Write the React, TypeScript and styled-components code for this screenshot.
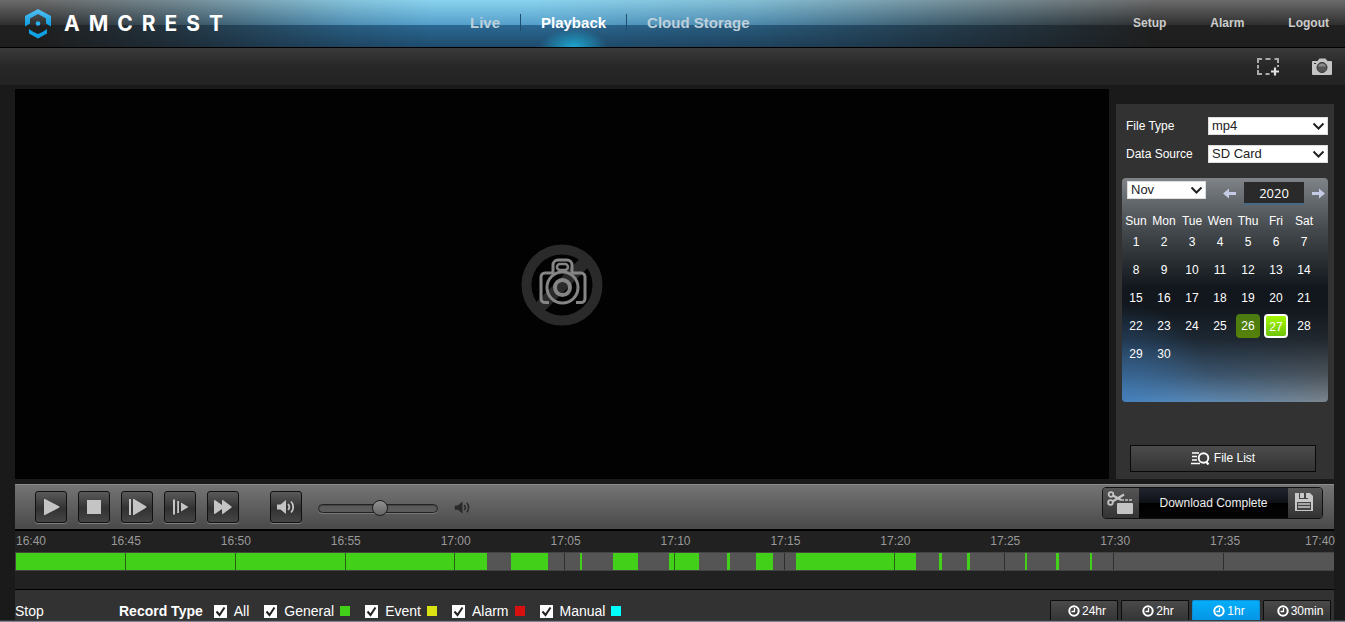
import React, { useState } from 'react';
import styled, { createGlobalStyle, css } from 'styled-components';

const GlobalStyle = createGlobalStyle`
  * { box-sizing: border-box; }
  body {
    margin: 0;
    background: #1a1a1a;
    color: #fff;
    font-family: "Liberation Sans", Arial, sans-serif;
    font-size: 12px;
  }
  button, input, select { font-family: inherit; margin: 0; }
`;

const chevron =
  "url(\"data:image/svg+xml,%3Csvg xmlns='http://www.w3.org/2000/svg' width='13' height='9'%3E%3Cpath d='M1.5 1.5l5 5 5-5' fill='none' stroke='%23222' stroke-width='2'/%3E%3C/svg%3E\")";
const tick =
  "url(\"data:image/svg+xml,%3Csvg xmlns='http://www.w3.org/2000/svg' width='13' height='13'%3E%3Cpath d='M2.5 6.5l3 3.5 5-7.5' fill='none' stroke='%23222' stroke-width='2'/%3E%3C/svg%3E\")";

const Page = styled.div`
  min-height: 100vh;
  display: flex;
  flex-direction: column;
`;

/* ---------- header ---------- */

const Header = styled.header`
  position: relative;
  display: flex;
  height: 48px;
  border-bottom: 1px solid #000;
  background: linear-gradient(#6c6c6c 0, #2e2e2e 25px, #202020 25px, #1e1e1e 100%);

  &::before {
    content: "";
    position: absolute;
    inset: 0;
    background: linear-gradient(#8ad2ee 0, #549fca 25px, #2b6993 25px, #1f4c6e 100%);
    mask-image: linear-gradient(
      90deg,
      transparent 3%,
      rgba(0, 0, 0, 0.3) 13%,
      rgba(0, 0, 0, 0.85) 26%,
      #000 32%,
      #000 40%,
      rgba(0, 0, 0, 0.8) 56%,
      rgba(0, 0, 0, 0.4) 70%,
      transparent 86%
    );
  }
`;

const Brand = styled.a`
  position: relative;
  flex: 0 0 450px;
  display: flex;
  align-items: center;
  gap: 12px;
  padding-left: 25px;
  color: #fff;
  text-decoration: none;
`;

const Wordmark = styled.span`
  font: 700 21px/24px Inter, "Liberation Sans", sans-serif;
  letter-spacing: 9px;
`;

const MainNav = styled.nav`
  position: relative;
  display: flex;
`;

const MainLink = styled.a<{ $active?: boolean }>`
  display: flex;
  justify-content: center;
  padding: 14px 20px 0;
  border-right: 1px solid transparent;
  font-size: 15px;
  line-height: 18px;
  font-weight: 700;
  text-decoration: none;
  white-space: nowrap;
  color: ${(p) => (p.$active ? '#fff' : '#bdd0dc')};
  background:
    linear-gradient(#1f4f70, #1f4f70) right 14px / 1px 17px no-repeat border-box
    ${(p) =>
      p.$active &&
      css`, radial-gradient(ellipse 34px 18px at 50% 100%, #1ea8d2, transparent) no-repeat`};

  &:last-child { background: none; }
`;

const UserNav = styled.nav`
  position: relative;
  display: flex;
  gap: 44px;
  margin-left: auto;
  padding: 14px 16px 0 0;

  a {
    font-size: 12px;
    line-height: 18px;
    font-weight: 700;
    color: #ccc;
    text-decoration: none;
  }
`;

const ToolStrip = styled.div`
  display: flex;
  justify-content: flex-end;
  align-items: center;
  gap: 32px;
  height: 37px;
  padding-right: 13px;
  background: linear-gradient(#3a3a3a, #272727 50%, #242424);
`;

const IconButton = styled.button`
  display: flex;
  padding: 0;
  border: 0;
  background: none;
  cursor: pointer;
`;

/* ---------- workspace ---------- */

const Workspace = styled.main`
  flex: 1;
  display: flex;
  flex-direction: column;
  padding: 4px 11px 0 15px;
`;

const Stage = styled.div`
  flex: 1;
  display: flex;
  gap: 7px;
  min-height: 390px;
  margin-bottom: 5px;
`;

const Video = styled.section`
  flex: 1;
  display: flex;
  align-items: center;
  justify-content: center;
  padding-top: 2px;
  background: #020202;
`;

const Sidebar = styled.aside`
  flex: 0 0 218px;
  display: flex;
  flex-direction: column;
  margin-top: 15px;
  padding: 13px 6px 7px;
  background: #323232;
`;

const Field = styled.label`
  display: flex;
  align-items: center;
  justify-content: space-between;
  height: 18px;
  margin-bottom: 10px;
  padding-left: 4px;
  font-size: 12px;
  line-height: 20px;
`;

const Select = styled.select<{ $width: number }>`
  appearance: none;
  width: ${(p) => p.$width}px;
  height: 18px;
  padding: 0 16px 0 3px;
  border: 1px solid #ddd;
  border-radius: 0;
  background: #fff ${chevron} right 2px center no-repeat;
  color: #222;
  font-size: 13px;
  line-height: 16px;
`;

const Calendar = styled.section`
  height: 224px;
  margin-top: 5px;
  border-radius: 4px;
  background:
    linear-gradient(#808488 0, #61666a 26px, #44494d 52px, rgba(18, 23, 29, 0) 110px),
    radial-gradient(ellipse 90px 100px at 0 100%, rgba(56, 115, 175, 0.55), transparent),
    linear-gradient(#12171d 58%, rgba(18, 23, 29, 0.85) 72%, rgba(18, 23, 29, 0.45) 88%, transparent),
    linear-gradient(90deg, #5591cb, #5f86ab 50%, #7b858e);
`;

const CalendarBar = styled.div`
  display: flex;
  align-items: flex-start;
  height: 36px;
  padding: 3px 3px 0 5px;
`;

const YearPicker = styled.div`
  display: flex;
  align-items: center;
  gap: 8px;
  margin: 1px 0 0 auto;
`;

const Year = styled.input`
  width: 60px;
  height: 23px;
  padding: 0;
  border: 0;
  border-bottom: 2px solid #456a85;
  background: #2a2a2a;
  color: #fff;
  text-align: center;
  && { font-family: "Open Sans", sans-serif; }
  font-size: 13px;
`;

const Days = styled.table`
  border-collapse: collapse;
  table-layout: fixed;
  width: 196px;

  th, td {
    padding: 0;
    font-size: 12px;
    font-weight: 400;
    text-align: center;
  }
  th { height: 14px; line-height: 14px; }
  td { height: 28px; }
`;

const Day = styled.button<{ $state?: 'recorded' | 'selected' }>`
  display: block;
  width: 24px;
  height: 24px;
  margin: 0 auto;
  padding: 0;
  border: 0;
  border-radius: 4px;
  background: none;
  color: #fff;
  font-size: 12px;
  cursor: pointer;
  ${(p) => p.$state === 'recorded' && css`background: linear-gradient(#4b7a12, #568208);`}
  ${(p) =>
    p.$state === 'selected' &&
    css`
      padding-top: 2px;
      border: 2px solid #fff;
      background: linear-gradient(#a4f800, #6fc40c);
    `}
`;

const FileListButton = styled.button`
  display: flex;
  align-items: center;
  justify-content: center;
  gap: 4px;
  height: 27px;
  margin: auto 12px 0 8px;
  padding: 0 0 1px;
  border: 1px solid #0a0a0a;
  background: linear-gradient(#4c4c4c, #333);
  color: #fff;
  font-size: 12px;
`;

/* ---------- playback controls ---------- */

const Controls = styled.div`
  display: flex;
  align-items: center;
  height: 47px;
  padding: 0 11px 0 20px;
  border-top: 1px solid #8c8c8c;
  border-bottom: 2px solid #000;
  background: linear-gradient(#747474, #494949);
`;

const ButtonGroup = styled.div`
  display: flex;
  gap: 11px;
  margin-right: 31px;
`;

const ControlButton = styled.button`
  display: flex;
  align-items: center;
  justify-content: center;
  width: 32px;
  height: 32px;
  padding: 0;
  border: 1px solid #111;
  border-radius: 3px;
  background: linear-gradient(#5a5a5a, #323232 55%, #454545);
  box-shadow: 0 1px 0 #808080;
`;

const Volume = styled.input`
  appearance: none;
  width: 120px;
  height: 9px;
  && { margin: 2px 16px 0; }
  border: 1px solid #222;
  border-radius: 5px;
  background: #5b5b5b;
  box-shadow: inset 0 1px 1px #444, 0 1px 0 #777;

  &::-webkit-slider-thumb {
    appearance: none;
    width: 16px;
    height: 16px;
    border: 1px solid #1c1c1c;
    border-radius: 50%;
    background: linear-gradient(#909090, #666);
  }
`;

const Download = styled.div`
  display: flex;
  height: 32px;
  margin: 0 0 10px auto;
  border: 1px solid #111;
  border-radius: 4px;
  overflow: hidden;
  align-self: flex-end;
`;

const DownloadButton = styled.button<{ $width: number }>`
  display: flex;
  align-items: center;
  justify-content: center;
  width: ${(p) => p.$width}px;
  padding: 0 2px 2px 0;
  border: 0;
  background: linear-gradient(#555, #333);
`;

const DownloadStatus = styled.output`
  width: 149px;
  line-height: 30px;
  text-align: center;
  font-size: 12px;
  color: #eee;
  background: linear-gradient(#22252e, #0e1016 50%, #000 50%, #050505);
`;

/* ---------- timeline ---------- */

const Timeline = styled.section`
  height: 58px;
  padding-top: 3px;
  background: #212121;
`;

const Hours = styled.div`
  display: grid;
  grid-template-columns: 1fr repeat(11, 2fr) 1fr;
  height: 18px;
  margin: 0 -1px 0 1px;
  line-height: 14px;
  font-size: 12px;
  color: #999;
  text-align: center;

  time:first-child { text-align: left; }
  time:last-child { text-align: right; }
`;

const Track = styled.div`
  position: relative;
  display: flex;
  height: 19px;
  border: 1px solid #444;
  border-width: 1px 0 1px 1px;
  background: #555;
`;

const Span = styled.div<{ $recorded: boolean }>`
  flex-basis: 0;
  background: ${(p) => (p.$recorded ? '#42d018' : '#555')};
`;

const Ticks = styled.div`
  position: absolute;
  inset: 0;
  display: grid;
  grid-template-columns: repeat(12, 1fr);

  i { border-right: 1px solid rgba(20, 20, 20, 0.6); }
  i:last-child { border: 0; }
`;

/* ---------- footer ---------- */

const Footer = styled.footer`
  display: flex;
  align-items: flex-end;
  height: 31px;
  border-top: 1px solid #000;
  background: #323232;
  font-size: 14px;
  line-height: 18px;
`;

const Status = styled.span`
  flex: 0 0 104px;
`;

const Filters = styled.fieldset`
  display: flex;
  align-items: center;
  gap: 15px;
  margin: 0;
  padding: 0;
  border: 0;
`;

const FilterTitle = styled.strong`
  margin-right: -4px;
`;

const Filter = styled.label`
  display: flex;
  align-items: center;
  gap: 7px;
`;

const Check = styled.input`
  appearance: none;
  width: 13px;
  height: 13px;
  background: #fff;
  &:checked { background: #fff ${tick} center no-repeat; }
`;

const Swatch = styled.span<{ $color: string }>`
  width: 10px;
  height: 10px;
  margin-left: -1px;
  background: ${(p) => p.$color};
`;

const Scales = styled.div`
  display: flex;
  gap: 3px;
  margin: 0 3px 0 auto;
`;

const ScaleButton = styled.button<{ $active: boolean }>`
  display: flex;
  align-items: center;
  justify-content: center;
  gap: 2px;
  width: 68px;
  height: 20px;
  padding: 0 0 0 6px;
  border: 1px solid ${(p) => (p.$active ? '#0a8fd8' : '#0c0c0c')};
  border-bottom: 0;
  border-radius: 2px 2px 0 0;
  background: ${(p) => (p.$active ? 'linear-gradient(#05aef8, #0595e6)' : 'linear-gradient(#4a4a4a, #353535)')};
  color: #fff;
  font-size: 12px;
`;

const BottomEdge = styled.div`
  height: 2px;
  background: #7f838c;
  border-top: 1px solid #3a3a40;
`;

/* ---------- drawings ---------- */

const LogoMark = () => (
  <svg width="27" height="30" viewBox="0 0 27 30" aria-hidden="true">
    <defs>
      <linearGradient id="mark" x1="0" y1="0" x2="0" y2="1">
        <stop offset="0" stopColor="#55c0f0" />
        <stop offset="1" stopColor="#0c9ce0" />
      </linearGradient>
    </defs>
    <path d="M0 17.500V7L13 0l13 7v10.500l-5-3V9.500L13 5 5 9.500v5z" fill="url(#mark)" />
    <path d="M4 20l4.500 3 4.500 2 4.500-2L22 20v4.500L13 29.500 4 24.500z" fill="#0fa3e6" />
    <circle cx="13" cy="14.500" r="2.300" fill="#2bb0ee" />
  </svg>
);

const RegionIcon = () => (
  <svg width="23" height="18" viewBox="0 0 23 18" fill="none" aria-hidden="true">
    <path d="M1 5V1h4M8.500 1h5M17.500 1H21v4M1 12v4h4M8.500 16h4M1 7v3.500M21 7v2" stroke="#aaa" strokeWidth="2" />
    <path d="M18 9.500v8M14 13.500h8" stroke="#e0e0e0" strokeWidth="2.200" />
  </svg>
);

const CameraIcon = () => (
  <svg width="20" height="17" viewBox="0 0 20 17" aria-hidden="true">
    <path d="M1 3h4.500L7.500.500h6L15.500 3H19a1 1 0 0 1 1 1v12a1 1 0 0 1-1 1H1a1 1 0 0 1-1-1V4a1 1 0 0 1 1-1z" fill="#c4c4c4" />
    <circle cx="10" cy="9.500" r="5" fill="#555" stroke="#333" />
    <path d="M6 8.500a4.200 4.200 0 0 1 8 0z" fill="#8a8a8a" />
    <path d="M2 5.500h2" stroke="#333" />
  </svg>
);

const NoVideoIcon = () => (
  <svg width="82" height="82" viewBox="0 0 82 82" fill="none" role="img" aria-label="No video">
    <circle cx="41" cy="41" r="35.500" stroke="#2a2a2a" strokeWidth="10" />
    <path d="M16 66l50-50" stroke="#2a2a2a" strokeWidth="12" />
    <g stroke="#858585" strokeWidth="3">
      <path d="M28 58.500h-4a4 4 0 0 1-4-4V33a4 4 0 0 1 4-4h8v-8a5 5 0 0 1 5-5h9a5 5 0 0 1 5 5v8h9a4 4 0 0 1 4 4v21.500a4 4 0 0 1-4 4h-5" />
      <rect x="36" y="20" width="11" height="6" rx="3" strokeWidth="2.500" />
      <circle cx="41.500" cy="43.500" r="15.500" />
      <circle cx="41.500" cy="43.500" r="7.500" strokeWidth="4" />
    </g>
  </svg>
);

const Arrow = ({ back }: { back?: boolean }) => (
  <svg width="13" height="11" viewBox="0 0 13 11" aria-hidden="true">
    <path
      d={back ? 'M0 5.500L6 .500v3.500h7v3H6v3.500z' : 'M13 5.500L7 .500v3.500H0v3h7v3.500z'}
      fill="#c5cbe4"
    />
  </svg>
);

const ListIcon = () => (
  <svg width="19" height="14" viewBox="0 0 19 14" fill="none" stroke="#fff" aria-hidden="true">
    <path d="M1 2h7M1 5.500h5M1 9h5M0 12.500h9" strokeWidth="1.500" />
    <circle cx="12.500" cy="7" r="4.800" strokeWidth="1.900" />
    <path d="M15 10.500l2.500 3" strokeWidth="2.200" />
  </svg>
);

type Glyph = 'play' | 'stop' | 'slow' | 'frame' | 'fast';
const glyphs: Record<Glyph, string> = {
  play: 'M4 2.500q0-1 1-.500l14 7.200q1 .800 0 1.600L5 18q-1 .500-1-.500z',
  stop: 'M4 3h14v14H4z',
  slow: 'M3 2h2v16H3zM7 2.500q0-1 1-.500l12 7.200q1 .800 0 1.600L8 18q-1 .500-1-.500z',
  frame: 'M4 2.500h2v15H4zM8.200 4h1.800v12H8.200zM12 5.500l7.500 4.500-7.500 4.500z',
  fast: 'M2 4q0-1.500 1.200-.800L10 8V4q0-1.500 1.200-.800l8 6q1 .800 0 1.600l-8 6Q10 17.500 10 16v-4l-6.800 4.800Q2 17.500 2 16z',
};

const PlayerGlyph = ({ name }: { name: Glyph }) => (
  <svg width="22" height="20" viewBox="0 0 22 20" aria-hidden="true">
    <path d={glyphs[name]} fill="#c4c4c4" />
  </svg>
);

const Speaker = ({ size, color }: { size: number; color: string }) => (
  <svg width={size} height={size} viewBox="0 0 20 20" fill="none" stroke={color} strokeWidth="1.800" aria-hidden="true">
    <path d="M1 7.500h3.500L10 3v14l-5.500-4.500H1z" fill={color} stroke="none" />
    <path d="M12 7a4.500 4.500 0 0 1 0 6M15 4.500a8 8 0 0 1 0 11" />
  </svg>
);

const ClipIcon = () => (
  <svg width="27" height="23" viewBox="0 0 27 23" fill="none" aria-hidden="true">
    <g stroke="#c4c4c4">
      <circle cx="4" cy="3.500" r="2.300" strokeWidth="1.800" />
      <circle cx="3.500" cy="11.500" r="2.300" strokeWidth="1.800" />
      <path d="M6 4.500l8 4.500M5.500 10.500L17 3.500" strokeWidth="2.200" />
      <path d="M14 9h12" strokeWidth="1.600" strokeDasharray="3 1" />
    </g>
    <rect x="10" y="12" width="16" height="11" rx="1" fill="#c4c4c4" />
  </svg>
);

const SaveIcon = () => (
  <svg width="18" height="18" viewBox="0 0 18 18" aria-hidden="true">
    <path d="M0 0h15l3 3v15H0z" fill="#c8c8c8" />
    <path d="M4 0h9v6H4z" fill="#444" />
    <path d="M5 0h4v5H5zM11 0h2v5h-2z" fill="#c8c8c8" />
    <path d="M2 9h14v8H2z" fill="#444" />
    <path d="M3 11h12M3 14h12" stroke="#c8c8c8" strokeWidth="1.500" />
  </svg>
);

const ClockIcon = () => (
  <svg width="12" height="12" viewBox="0 0 12 12" fill="none" stroke="#fff" aria-hidden="true">
    <circle cx="6" cy="6" r="4.700" strokeWidth="2" />
    <path d="M6.500 3v3.500H3.500" strokeWidth="1.300" />
  </svg>
);

/* ---------- data ---------- */

const weekdays = ['Sun', 'Mon', 'Tue', 'Wen', 'Thu', 'Fri', 'Sat'];
const weeks = [0, 1, 2, 3, 4].map((w) => weekdays.map((_, d) => w * 7 + d + 1));

const hours = [
  '16:40', '16:45', '16:50', '16:55', '17:00', '17:05', '17:10',
  '17:15', '17:20', '17:25', '17:30', '17:35', '17:40',
];

// Alternating lengths: recorded, empty, recorded, ...
const spans = [
  471, 24, 37, 32, 2, 31, 25, 31, 30, 28, 3, 26, 17, 23, 120, 23, 3, 25, 3, 55, 2, 29, 3, 31, 2, 242,
];

const recordTypes = [
  { name: 'All' },
  { name: 'General', color: '#42d018' },
  { name: 'Event', color: '#dbe312' },
  { name: 'Alarm', color: '#d81010' },
  { name: 'Manual', color: '#00ffff' },
];

const players: { name: Glyph; label: string }[] = [
  { name: 'play', label: 'Play' },
  { name: 'stop', label: 'Stop' },
  { name: 'slow', label: 'Slow' },
  { name: 'frame', label: 'Next frame' },
  { name: 'fast', label: 'Fast' },
];

export default function App() {
  const [scale, setScale] = useState('1hr');
  const [day, setDay] = useState(27);

  return (
    <Page>
      <GlobalStyle />
      <Header>
        <Brand href="#home">
          <LogoMark />
          <Wordmark>AMCREST</Wordmark>
        </Brand>
        <MainNav>
          <MainLink href="#live">Live</MainLink>
          <MainLink href="#playback" $active>Playback</MainLink>
          <MainLink href="#cloud">Cloud Storage</MainLink>
        </MainNav>
        <UserNav>
          <a href="#setup">Setup</a>
          <a href="#alarm">Alarm</a>
          <a href="#logout">Logout</a>
        </UserNav>
      </Header>
      <ToolStrip>
        <IconButton aria-label="Select region"><RegionIcon /></IconButton>
        <IconButton aria-label="Snapshot"><CameraIcon /></IconButton>
      </ToolStrip>

      <Workspace>
        <Stage>
          <Video><NoVideoIcon /></Video>
          <Sidebar>
            <Field>
              File Type
              <Select $width={120} defaultValue="mp4">
                <option>mp4</option>
                <option>dav</option>
              </Select>
            </Field>
            <Field>
              Data Source
              <Select $width={120} defaultValue="SD Card">
                <option>SD Card</option>
              </Select>
            </Field>
            <Calendar>
              <CalendarBar>
                <Select $width={79} aria-label="Month" defaultValue="Nov">
                  <option>Nov</option>
                  <option>Dec</option>
                </Select>
                <YearPicker>
                  <IconButton aria-label="Previous year"><Arrow back /></IconButton>
                  <Year aria-label="Year" defaultValue="2020" />
                  <IconButton aria-label="Next year"><Arrow /></IconButton>
                </YearPicker>
              </CalendarBar>
              <Days>
                <thead>
                  <tr>{weekdays.map((d) => <th key={d} scope="col">{d}</th>)}</tr>
                </thead>
                <tbody>
                  {weeks.map((week) => (
                    <tr key={week[0]}>
                      {week.map((n) => (
                        <td key={n}>
                          {n <= 30 && (
                            <Day
                              $state={n === day ? 'selected' : n === 26 ? 'recorded' : undefined}
                              onClick={() => setDay(n)}
                            >
                              {n}
                            </Day>
                          )}
                        </td>
                      ))}
                    </tr>
                  ))}
                </tbody>
              </Days>
            </Calendar>
            <FileListButton><ListIcon />File List</FileListButton>
          </Sidebar>
        </Stage>

        <Controls>
          <ButtonGroup>
            {players.map((p) => (
              <ControlButton key={p.name} aria-label={p.label}><PlayerGlyph name={p.name} /></ControlButton>
            ))}
          </ButtonGroup>
          <ControlButton aria-label="Mute"><Speaker size={20} color="#c4c4c4" /></ControlButton>
          <Volume type="range" aria-label="Volume" min={0} max={100} defaultValue={52} />
          <Speaker size={17} color="#2a2a2a" />
          <Download>
            <DownloadButton $width={36} aria-label="Clip"><ClipIcon /></DownloadButton>
            <DownloadStatus>Download Complete</DownloadStatus>
            <DownloadButton $width={34} aria-label="Save"><SaveIcon /></DownloadButton>
          </Download>
        </Controls>

        <Timeline>
          <Hours>{hours.map((h) => <time key={h}>{h}</time>)}</Hours>
          <Track>
            {spans.map((length, i) => (
              <Span key={i} $recorded={i % 2 === 0} style={{ flexGrow: length }} />
            ))}
            <Ticks>{hours.slice(1).map((h) => <i key={h} />)}</Ticks>
          </Track>
        </Timeline>

        <Footer>
          <Status>Stop</Status>
          <Filters aria-label="Record Type">
            <FilterTitle>Record Type</FilterTitle>
            {recordTypes.map((t) => (
              <Filter key={t.name}>
                <Check type="checkbox" defaultChecked />
                {t.name}
                {t.color && <Swatch $color={t.color} />}
              </Filter>
            ))}
          </Filters>
          <Scales>
            {['24hr', '2hr', '1hr', '30min'].map((s) => (
              <ScaleButton key={s} $active={s === scale} onClick={() => setScale(s)}>
                <ClockIcon />{s}
              </ScaleButton>
            ))}
          </Scales>
        </Footer>
      </Workspace>
      <BottomEdge />
    </Page>
  );
}
